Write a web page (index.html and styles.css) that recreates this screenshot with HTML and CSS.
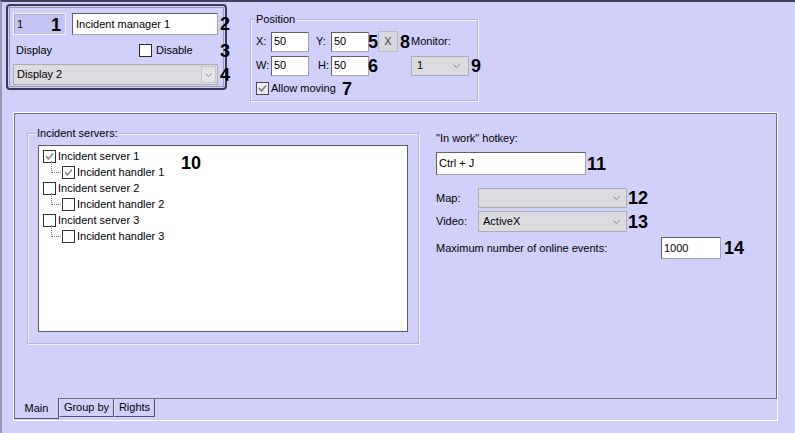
FILE: index.html
```html
<!DOCTYPE html>
<html lang="en">
<head>
    <meta charset="UTF-8">
    <title>Incident manager</title>
    <link rel="stylesheet" href="styles.css">
</head>
<body>
<div class="window">
    <div class="top">
        <div class="ident">
            <div class="id-row r1">
                <div class="idbox">1<span class="num">1</span></div>
                <div class="edit name">Incident manager 1</div>
                <span class="num">2</span>
            </div>
            <div class="id-row r2">
                <span class="lbl-display">Display</span>
                <span class="cb"></span>
                <span class="lbl-disable">Disable</span>
                <span class="num">3</span>
            </div>
            <div class="id-row r3">
                <div class="combo display-combo">
                    <span>Display 2</span>
                    <span class="drop">
                        <svg width="7" height="4"><polyline points="0.5,0.5 3.5,3.5 6.5,0.5" fill="none" stroke="#808080"/></svg>
                    </span>
                </div>
                <span class="num">4</span>
            </div>
        </div>

        <div class="group position">
            <span class="group-title">Position</span>
            <div class="pos-row">
                <span class="axis">X:</span>
                <div class="edit coord">50</div>
                <span class="axis gap">Y:</span>
                <div class="edit coord">50</div>
                <span class="num tight">5</span>
                <div class="btn">X</div>
                <span class="num n8">8</span>
                <span class="monitor">Monitor:</span>
            </div>
            <div class="pos-row row2">
                <span class="axis">W:</span>
                <div class="edit coord">50</div>
                <span class="axis gap h">H:</span>
                <div class="edit coord">50</div>
                <span class="num tight">6</span>
                <div class="combo monitor-combo">
                    <span>1</span>
                    <svg width="7" height="4"><polyline points="0.5,0.5 3.5,3.5 6.5,0.5" fill="none" stroke="#808080"/></svg>
                </div>
                <span class="num n9">9</span>
            </div>
            <div class="pos-row row3">
                <span class="cb soft checked">
                    <svg width="11" height="11"><polyline points="2,5 4.5,8 9,2.5" fill="none" stroke="#7c7c7c" stroke-width="1.6"/></svg>
                </span>
                <span class="lbl-moving">Allow moving</span>
                <span class="num">7</span>
            </div>
        </div>
    </div>

    <div class="tabctl">
        <div class="page">
            <div class="group servers">
                <span class="group-title">Incident servers:</span>
                <div class="tree">
                    <div class="node">
                        <span class="cb checked"><svg width="11" height="11"><polyline points="2,5 4.5,8 9,2.5" fill="none" stroke="#8a8a8a" stroke-width="1.6"/></svg></span>
                        <span class="node-text">Incident server 1</span>
                    </div>
                    <div class="node child">
                        <span class="cb checked"><svg width="11" height="11"><polyline points="2,5 4.5,8 9,2.5" fill="none" stroke="#8a8a8a" stroke-width="1.6"/></svg></span>
                        <span class="node-text">Incident handler 1</span>
                    </div>
                    <div class="node">
                        <span class="cb"></span>
                        <span class="node-text">Incident server 2</span>
                    </div>
                    <div class="node child">
                        <span class="cb"></span>
                        <span class="node-text">Incident handler 2</span>
                    </div>
                    <div class="node">
                        <span class="cb"></span>
                        <span class="node-text">Incident server 3</span>
                    </div>
                    <div class="node child">
                        <span class="cb"></span>
                        <span class="node-text">Incident handler 3</span>
                    </div>
                    <span class="num tree-num">10</span>
                </div>
            </div>

            <div class="props">
                <div class="hotkey-label">"In work" hotkey:</div>
                <div class="field-row hotkey-row">
                    <div class="edit hotkey">Ctrl + J</div>
                    <span class="num">11</span>
                </div>
                <div class="field-row map-row">
                    <span class="field-label">Map:</span>
                    <div class="combo wide">
                        <span></span>
                        <svg width="7" height="4"><polyline points="0.5,0.5 3.5,3.5 6.5,0.5" fill="none" stroke="#808080"/></svg>
                    </div>
                    <span class="num">12</span>
                </div>
                <div class="field-row video-row">
                    <span class="field-label">Video:</span>
                    <div class="combo wide">
                        <span>ActiveX</span>
                        <svg width="7" height="4"><polyline points="0.5,0.5 3.5,3.5 6.5,0.5" fill="none" stroke="#808080"/></svg>
                    </div>
                    <span class="num">13</span>
                </div>
                <div class="field-row max-row">
                    <span class="field-label long">Maximum number of online events:</span>
                    <div class="edit max">1000</div>
                    <span class="num n14">14</span>
                </div>
            </div>
        </div>
        <div class="tabstrip">
            <div class="tab active">Main</div>
            <div class="tab group-tab">Group by</div>
            <div class="tab rights-tab">Rights</div>
        </div>
    </div>
</div>
</body>
</html>
```

FILE: styles.css
```css
:root {
    --bg: #d0d0fa;
    --line: #6e6e82;
    --dark: #3a3a56;
    --combo: #dcdce0;
}

* {
    margin: 0;
    padding: 0;
    box-sizing: border-box;
}

body {
    background: var(--bg);
    color: #000;
    font-family: "Liberation Sans", Arial, sans-serif;
    font-size: 11px;
    line-height: 13px;
}

.window {
    height: 433px;
    border-top: 2px solid #404060;
    border-left: 2px solid #9a9ab4;
    overflow: hidden;
}

.num {
    font: bold 18px/1 "Liberation Sans", Arial, sans-serif;
    color: #000;
}

/* ---------- top area ---------- */

.top {
    display: flex;
    align-items: flex-start;
}

.ident {
    margin: 2px 0 0 4px;
    width: 221px;
    height: 86px;
    border: 2px solid var(--dark);
    border-radius: 4px;
    box-shadow: inset 0 0 0 1px var(--bg), inset 0 0 0 2px #9a9ab8;
    padding: 7px 0 0 5px;
}

.id-row,
.pos-row,
.field-row {
    display: flex;
    align-items: center;
    white-space: nowrap;
}

.id-row > *,
.pos-row > *,
.field-row > * {
    flex: none;
}

.r1 {
    height: 22px;
}

.idbox {
    position: relative;
    width: 53px;
    height: 22px;
    padding-left: 3px;
    line-height: 20px;
    background: #c4c4f2;
    border: 1px solid #f4f4ff;
    box-shadow: inset 1px 1px 0 #a8a8d0;
}

.idbox .num {
    position: absolute;
    right: 4px;
    top: 2px;
}

.edit {
    background: #fff;
    border: 1px solid;
    border-color: #606066 #a4a4aa #a4a4aa #606066;
    padding-left: 2px;
    display: flex;
    align-items: center;
    white-space: nowrap;
}

.edit.name {
    margin-left: 6px;
    width: 146px;
    height: 22px;
    padding-left: 3px;
}

.r1 > .num {
    margin-left: 2px;
}

.r2 {
    margin-top: 9px;
    height: 13px;
}

.lbl-display {
    width: 126px;
    padding-left: 3px;
}

.cb {
    width: 13px;
    height: 13px;
    flex: none;
    background: #fff;
    border: 1px solid #2a2a2a;
    display: flex;
    align-items: center;
    justify-content: center;
}

.cb.soft {
    background: #ececfa;
    border-color: #4a4a4a;
}

.lbl-disable {
    margin-left: 4px;
    width: 64px;
}

.r3 {
    margin-top: 7px;
}

.combo {
    background: var(--combo);
    border: 1px solid #acacb4;
    display: flex;
    align-items: center;
    justify-content: space-between;
    white-space: nowrap;
}

.display-combo {
    width: 205px;
    height: 21px;
    padding-left: 3px;
}

.drop {
    width: 15px;
    height: 17px;
    margin-right: 1px;
    border: 1px solid #c6c6cc;
    background: #e4e4e8;
    display: flex;
    align-items: center;
    justify-content: center;
}

.r3 > .num {
    margin-left: 2px;
}

/* ---------- group boxes ---------- */

.group {
    position: relative;
    border: 1px solid #b4b4d4;
    box-shadow: inset 1px 1px 0 #f2f2ff, 1px 1px 0 #f2f2ff;
}

.group-title {
    position: absolute;
    top: -8px;
    left: 4px;
    padding: 0 1px;
    line-height: 14px;
    background: var(--bg);
    white-space: nowrap;
}

.position {
    margin: 17px 0 0 23px;
    width: 228px;
    height: 82px;
    padding: 11px 0 0 5px;
}

.pos-row {
    height: 21px;
}

.axis {
    width: 15px;
}

.axis.gap {
    margin-left: 7px;
}

.axis.h {
    padding-left: 2px;
}

.edit.coord {
    width: 38px;
    height: 20px;
}

.num.tight {
    margin-left: -1px;
    width: 10px;
}

.btn {
    width: 20px;
    height: 21px;
    background: #d8d8e0;
    border: 1px solid #b8b8c6;
    color: #404040;
    display: flex;
    align-items: center;
    justify-content: center;
}

.n8 {
    margin-left: 2px;
}

.monitor {
    margin-left: 1px;
}

.row2 {
    margin-top: 3px;
}

.monitor-combo {
    margin-left: 33px;
    width: 58px;
    height: 20px;
    padding: 0 8px 0 5px;
}

.n9 {
    margin-left: 2px;
}

.row3 {
    margin-top: 6px;
    height: 13px;
}

.lbl-moving {
    margin-left: 2px;
    width: 71px;
}

/* ---------- tab control ---------- */

.tabctl {
    margin: 11px 0 0 11px;
    width: 765px;
    border: 1px solid #fff;
}

.page {
    height: 286px;
    border: 1px solid var(--line);
    display: flex;
    align-items: flex-start;
}

.servers {
    flex: none;
    margin: 19px 0 0 12px;
    width: 392px;
    height: 211px;
    padding: 11px 0 0 10px;
}

.servers .group-title {
    left: 8px;
}

.tree {
    position: relative;
    width: 370px;
    height: 187px;
    background: #fff;
    border: 1px solid #5a5a64;
    padding: 2px 0 0 4px;
}

.node {
    position: relative;
    height: 16px;
    display: flex;
    align-items: center;
    white-space: nowrap;
}

.node .cb {
    border-color: #333;
}

.node-text {
    margin-left: 2px;
}

.node.child {
    padding-left: 19px;
}

.node.child::before {
    content: "";
    position: absolute;
    left: 8px;
    top: -3px;
    width: 11px;
    height: 11px;
    border-left: 1px dotted #808080;
    border-bottom: 1px dotted #808080;
}

.tree-num {
    position: absolute;
    left: 142px;
    top: 8px;
}

.props {
    margin: 17px 0 0 17px;
}

.hotkey-label {
    line-height: 14px;
}

.hotkey-row {
    margin-top: 7px;
}

.edit.hotkey {
    width: 150px;
    height: 23px;
}

.hotkey-row .num {
    margin-left: 2px;
}

.field-label {
    width: 42px;
}

.field-label.long {
    width: 225px;
}

.combo.wide {
    width: 149px;
    padding: 0 6px 0 4px;
}

.map-row {
    margin-top: 13px;
}

.map-row .combo {
    height: 20px;
}

.video-row {
    margin-top: 3px;
}

.video-row .combo {
    height: 21px;
}

.field-row > .num {
    margin-left: 1px;
}

.max-row {
    margin-top: 5px;
}

.edit.max {
    width: 60px;
    height: 22px;
}

.field-row > .n14 {
    margin-left: 3px;
}

.tabstrip {
    display: flex;
    align-items: flex-start;
    height: 21px;
}

.tab {
    height: 18px;
    line-height: 16px;
    text-align: center;
    border-left: 1px solid #e6e6fa;
    border-right: 1px solid #555566;
    border-bottom: 1px solid #555566;
    background: var(--bg);
}

.tab.active {
    margin-top: -1px;
    width: 45px;
    height: 21px;
    line-height: 20px;
    border-left-color: var(--line);
}

.group-tab {
    width: 55px;
}

.rights-tab {
    width: 41px;
}
```
